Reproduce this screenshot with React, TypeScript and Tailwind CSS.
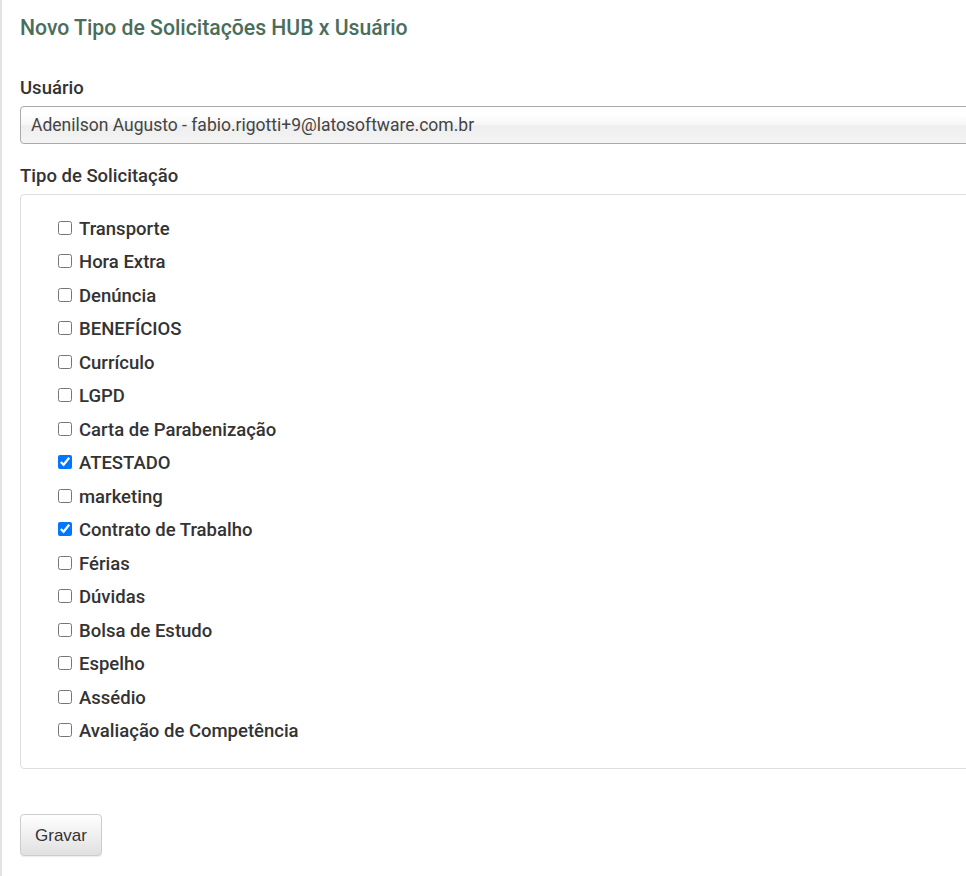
import { useState } from 'react';

const tipos = [
  { nome: 'Transporte', marcado: false },
  { nome: 'Hora Extra', marcado: false },
  { nome: 'Denúncia', marcado: false },
  { nome: 'BENEFÍCIOS', marcado: false },
  { nome: 'Currículo', marcado: false },
  { nome: 'LGPD', marcado: false },
  { nome: 'Carta de Parabenização', marcado: false },
  { nome: 'ATESTADO', marcado: true },
  { nome: 'marketing', marcado: false },
  { nome: 'Contrato de Trabalho', marcado: true },
  { nome: 'Férias', marcado: false },
  { nome: 'Dúvidas', marcado: false },
  { nome: 'Bolsa de Estudo', marcado: false },
  { nome: 'Espelho', marcado: false },
  { nome: 'Assédio', marcado: false },
  { nome: 'Avaliação de Competência', marcado: false },
];

export default function App() {
  const [selecionados, setSelecionados] = useState<string[]>(
    tipos.filter((t) => t.marcado).map((t) => t.nome)
  );

  const toggle = (nome: string) => {
    setSelecionados((prev) =>
      prev.includes(nome) ? prev.filter((n) => n !== nome) : [...prev, nome]
    );
  };

  return (
    <div className="h-[876px] w-[966px] overflow-hidden bg-white font-['Roboto',sans-serif] text-[#333]">
      <div className="h-full border-l-2 border-[#e3e3e3] pl-[18px]">
        <div className="w-[1100px]">
          <h3 className="pt-[14px] text-[21.2px] leading-[28px] font-medium text-[#4a6d5c]">
            Novo Tipo de Solicitações HUB x Usuário
          </h3>

          <label className="mt-[36px] block text-[18.5px] leading-[20px] font-medium text-[#333]">
            Usuário
          </label>
          <div className="mt-[8px] flex h-[38px] items-center rounded-[4px] border border-[#aaa] bg-[linear-gradient(#fff_20%,#f6f6f6_50%,#eee_52%,#f4f4f4_100%)] px-[10px] text-[17.5px] text-[#444]">
            Adenilson Augusto - fabio.rigotti+9@latosoftware.com.br
          </div>

          <label className="mt-[22px] block text-[18.5px] leading-[20px] font-medium text-[#333]">
            Tipo de Solicitação
          </label>
          <div className="mt-[8px] h-[575px] rounded-[4px] border border-[#ddd] pt-[18px] pl-[37px]">
            {tipos.map((t) => (
              <label key={t.nome} className="flex h-[33.5px] items-center gap-[7px] text-[18.5px] font-medium text-[#333]">
                <input
                  type="checkbox"
                  className="m-0 mb-[4px] h-[14px] w-[14px]"
                  checked={selecionados.includes(t.nome)}
                  onChange={() => toggle(t.nome)}
                />
                {t.nome}
              </label>
            ))}
          </div>

          <button className="mt-[45px] h-[42px] w-[82px] rounded-[4px] border border-[#ccc] bg-[linear-gradient(#fff,#e0e0e0)] pt-[2px] font-['Liberation_Sans',sans-serif] text-[17px] text-[#333] shadow-[0_1px_1px_rgba(0,0,0,0.075)]">
            Gravar
          </button>
        </div>
      </div>
    </div>
  );
}
